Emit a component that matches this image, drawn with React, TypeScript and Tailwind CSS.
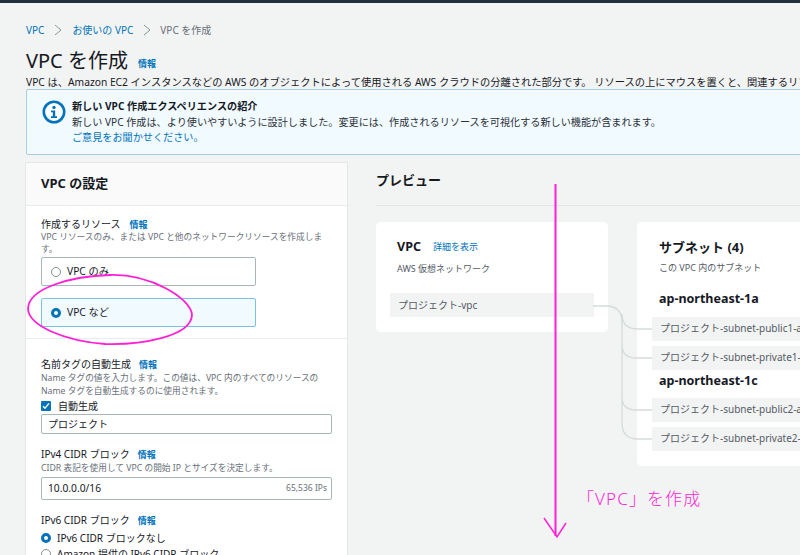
const Info = ({ className = "" }: { className?: string }) => (
  <span className={`text-[9px] font-bold text-[#0073bb] ${className}`}>情報</span>
);

const Node = ({ label, className = "" }: { label: string; className?: string }) => (
  <div className={`flex h-[24px] items-center whitespace-nowrap bg-[#f2f3f3] pl-[8px] text-[10px] text-[#545b64] ${className}`}>{label}</div>
);

const Chevron = () => (
  <svg width="8" height="12" viewBox="0 0 8 12" fill="none" stroke="#879596" strokeWidth="1" className="mx-[10px]">
    <path d="M1 1l6 5-6 5" />
  </svg>
);

export default function App() {
  return (
    <div
      className="relative h-[555px] w-[800px] overflow-hidden bg-[#f2f3f3] text-[#16191f]"
      style={{ fontFamily: '"Noto Sans", "Noto Sans CJK JP", sans-serif' }}
    >
      <div className="h-[3px] bg-[#232f3e]" />
      <div className="pl-[26px]">
        <nav className="mt-[19px] flex h-[16px] items-center whitespace-nowrap text-[10px] leading-none">
          <span className="text-[#0073bb]">VPC</span>
          <Chevron />
          <span className="text-[#0073bb]">お使いの VPC</span>
          <Chevron />
          <span className="-ml-[1px] text-[#687078]">VPC を作成</span>
        </nav>
        <div className="mt-[8px] flex h-[29px] items-center whitespace-nowrap">
          <h1 className="text-[20px] font-normal leading-none">VPC を作成</h1>
          <Info className="ml-[10px] mt-[7px]" />
        </div>
        <p className="h-[14px] whitespace-nowrap text-[10.25px] leading-[14px]">
          VPC は、Amazon EC2 インスタンスなどの AWS のオブジェクトによって使用される AWS クラウドの分離された部分です。 リソースの上にマウスを置くと、関連するリソースが強調表示されます。
        </p>
        <div className="flex h-[66px] w-[800px] rounded-[2px] border border-[#a9cfe6] bg-[#f1faff] pl-[15px] pt-[9px]">
          <svg width="24" height="24" viewBox="0 0 24 24" className="mt-[1px] shrink-0">
            <circle cx="12" cy="12" r="10.2" fill="#fff" stroke="#0073bb" strokeWidth="2.6" />
            <circle cx="12" cy="7.4" r="1.7" fill="#0073bb" />
            <path d="M9 10.5h4.2v5.8H15v1.8H9v-1.8h1.8v-4H9z" fill="#0073bb" />
          </svg>
          <div className="ml-[6px] whitespace-nowrap text-[10.15px] leading-[15.5px]">
            <div className="font-bold">新しい VPC 作成エクスペリエンスの紹介</div>
            <div className="text-[#2b3138]">新しい VPC 作成は、より使いやすいように設計しました。変更には、作成されるリソースを可視化する新しい機能が含まれます。</div>
            <div className="text-[#0073bb]">ご意見をお聞かせください。</div>
          </div>
        </div>

        <div className="mt-[8px] flex items-start">
          <section className="h-[400px] w-[321px] shrink-0 bg-white shadow-[0_0_1px_rgba(0,28,36,0.3)]">
            <header className="flex h-[43px] items-center border-b border-[#eaeded] bg-[#fafafa] pl-[15px] text-[13px] font-bold">VPC の設定</header>
            <div className="h-[133px] border-b border-[#eaeded] pl-[15px] pr-[12px] pt-[10px]">
              <div className="flex h-[16px] items-center text-[10px] leading-none">
                作成するリソース<Info className="ml-[9px]" />
              </div>
              <p className="text-[8.7px] leading-[11.5px] text-[#687078]">VPC リソースのみ、または VPC と他のネットワークリソースを作成します。</p>
              <div className="mt-[2px] flex h-[29px] w-[215px] items-center rounded-[2px] border border-[#aab7b8] bg-white pl-[9px] text-[10.25px]">
                <span className="mr-[6px] h-[10px] w-[10px] rounded-full border border-[#879596] bg-white" />VPC のみ
              </div>
              <div className="mt-[12px] flex h-[29px] w-[215px] items-center rounded-[2px] border border-[#7cc0e2] bg-[#f1faff] pl-[9px] text-[10.25px]">
                <span className="mr-[6px] h-[10px] w-[10px] rounded-full border-[3px] border-[#0073bb] bg-white" />VPC など
              </div>
            </div>
            <div className="pl-[15px] pr-[15px] pt-[17px]">
              <div className="flex h-[16px] items-center text-[10px] leading-none">
                名前タグの自動生成<Info className="ml-[8px]" />
              </div>
              <p className="text-[8.7px] leading-[12.5px] text-[#687078]">Name タグの値を入力します。この値は、VPC 内のすべてのリソースの<br />Name タグを自動生成するのに使用されます。</p>
              <div className="mt-[1px] flex h-[16px] items-center text-[10px]">
                <span className="mr-[7px] flex h-[10px] w-[10px] items-center justify-center rounded-[1px] bg-[#0073bb]">
                  <svg width="8" height="8" viewBox="0 0 8 8" fill="none" stroke="#fff" strokeWidth="1.4"><path d="M1 4.2l2 2L7 1.4" /></svg>
                </span>
                自動生成
              </div>
              <div className="flex h-[20px] items-center rounded-[2px] border border-[#aab7b8] bg-white pl-[6px] text-[10px]">プロジェクト</div>
              <div className="mt-[12px] flex h-[16px] items-center text-[10px] leading-none">
                IPv4 CIDR ブロック<Info className="ml-[8px]" />
              </div>
              <p className="text-[8.7px] leading-[12.5px] text-[#687078]">CIDR 表記を使用して VPC の開始 IP とサイズを決定します。</p>
              <div className="mt-[2.5px] flex h-[23px] items-center justify-between rounded-[2px] border border-[#aab7b8] bg-white pl-[6px] pr-[4px] text-[10.25px]">
                10.0.0.0/16<span className="text-[8.5px] text-[#687078]">65,536 IPs</span>
              </div>
              <div className="mt-[12px] flex h-[16px] items-center text-[10px] leading-none">
                IPv6 CIDR ブロック<Info className="ml-[8px]" />
              </div>
              <div className="mt-[2px] flex h-[16px] items-center text-[10px]">
                <span className="mr-[6px] h-[10px] w-[10px] rounded-full border-[3px] border-[#0073bb] bg-white" />IPv6 CIDR ブロックなし
              </div>
              <div className="flex h-[16px] items-center text-[10px]">
                <span className="mr-[6px] h-[10px] w-[10px] rounded-full border border-[#879596] bg-white" />Amazon 提供の IPv6 CIDR ブロック
              </div>
            </div>
          </section>

          <section className="ml-[29px] min-w-0 flex-1">
            <h2 className="h-[43px] border-b border-[#e3e6e6] pt-[7px] text-[13px] font-bold leading-[20px]">プレビュー</h2>
            <div className="mt-[16px] flex items-start">
              <div className="h-[110px] w-[232px] shrink-0 rounded-[5px] bg-white pl-[14px] pr-[14px] pt-[17px]">
                <div className="flex h-[16px] items-center pl-[7px]">
                  <span className="text-[12.5px] font-bold">VPC</span>
                  <span className="ml-[12px] text-[9px] text-[#0073bb]">詳細を表示</span>
                </div>
                <div className="mt-[6.5px] pl-[7px] text-[9px] leading-[13px] text-[#545b64]">AWS 仮想ネットワーク</div>
                <Node label="プロジェクト-vpc" className="mt-[18.5px]" />
              </div>
              <div className="ml-[29px] h-[244px] w-[300px] shrink-0 rounded-l-[5px] bg-white pl-[22px] pt-[15px]">
                <div className="text-[13px] font-bold leading-[20px]">サブネット (4)</div>
                <div className="mt-[4px] text-[9px] leading-[13px] text-[#545b64]">この VPC 内のサブネット</div>
                <div className="mt-[16.5px] text-[12.5px] font-bold leading-[16px]">ap-northeast-1a</div>
                <Node label="プロジェクト-subnet-public1-ap-northeast-1a" className="-ml-[7px] mt-[10px]" />
                <Node label="プロジェクト-subnet-private1-ap-northeast-1a" className="-ml-[7px] mt-[5px]" />
                <div className="mt-[3px] text-[12.5px] font-bold leading-[16px]">ap-northeast-1c</div>
                <Node label="プロジェクト-subnet-public2-ap-northeast-1c" className="-ml-[7px] mt-[9px]" />
                <Node label="プロジェクト-subnet-private2-ap-northeast-1c" className="-ml-[7px] mt-[5px]" />
              </div>
            </div>
          </section>
        </div>
      </div>

      {/* connectors and hand-drawn annotations lying over the page */}
      <svg width="800" height="555" viewBox="0 0 800 555" fill="none" className="absolute left-0 top-0">
        <path
          d="M593 306H606Q622 306 622 322V423Q622 439 638 439H652M622 314Q622 329 638 329H652M622 345Q622 358 636 358H652M622 397Q622 410 636 410H652"
          stroke="#d5dbdb"
          strokeWidth="1.3"
        />
        <path d="M555.5 184V536" stroke="#ff1fd6" strokeWidth="2" />
        <path d="M544 518L557 537L566 523" stroke="#ff1fd6" strokeWidth="1.5" />
        <path
          d="M110 275C150 274 191 298 192 315C191 337 140 345 105 344C65 341 29 326 28 309C28 288 72 276 110 275Z"
          stroke="#ff1fd6"
          strokeWidth="1.8"
        />
      </svg>
      <span className="absolute left-[577px] top-[487px] whitespace-nowrap text-[17px] font-light leading-[24px] tracking-[1.1px] text-[#ff1fd6]">「VPC」を作成</span>
    </div>
  );
}
